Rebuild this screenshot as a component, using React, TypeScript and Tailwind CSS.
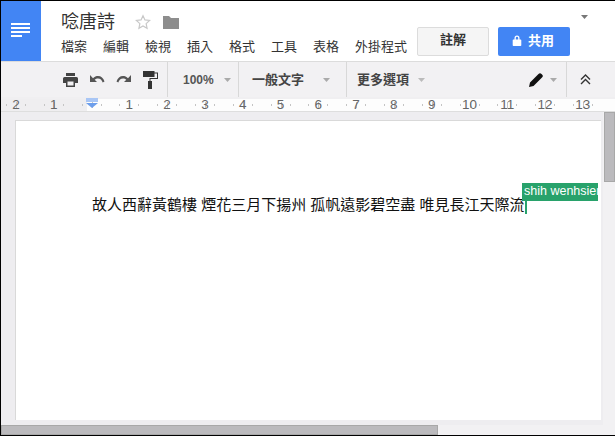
import React from "react";

const menus = ["檔案", "編輯", "檢視", "插入", "格式", "工具", "表格", "外掛程式"];
const rulerNums = ["2", "1", "", "1", "2", "3", "4", "5", "6", "7", "8", "9", "10", "11", "12", "13"];

function Caret({ className = "" }: { className?: string }) {
  return (
    <svg width="7" height="4" viewBox="0 0 7 4" className={className}>
      <path d="M0 0h7L3.5 4z" fill="currentColor" />
    </svg>
  );
}

function RulerCell({ n }: { n: string }) {
  return (
    <div className="w-[37.8px] shrink-0 flex items-center justify-center relative h-full">
      <span className="text-[13.5px] leading-[12px] text-[#666] relative z-10">{n}</span>
      <svg width="38" height="12" viewBox="0 0 38 12" className="absolute left-0 top-0">
        <rect x="9" y="5" width="1" height="2" fill="#c4c4c4" />
        <rect x="19" y="3" width="1" height="6" fill="#c4c4c4" />
        <rect x="28" y="5" width="1" height="2" fill="#c4c4c4" />
      </svg>
    </div>
  );
}

export default function App() {
  return (
    <div className="w-[615px] h-[436px] overflow-hidden bg-white border-t border-l border-b border-black flex flex-col font-['Liberation_Sans','Noto_Sans_CJK_TC',sans-serif] text-[#222]">
      {/* Header */}
      <div className="h-[60px] shrink-0 flex relative">
        <div className="w-[40px] h-[60px] bg-[#4285f4] flex items-center justify-center shrink-0">
          <svg width="20" height="16" viewBox="0 0 20 16">
            <rect x="0" y="0" width="19" height="2" fill="#fff" />
            <rect x="0" y="4" width="19" height="2" fill="#fff" />
            <rect x="0" y="8" width="19" height="2" fill="#fff" />
            <rect x="0" y="12" width="11" height="2" fill="#fff" />
          </svg>
        </div>
        <div className="flex-1 flex flex-col pl-[20px] pt-[9px]">
          <div className="flex items-center h-[24px]">
            <span className="text-[18px] leading-[24px] text-[#333] w-[74px]">唸唐詩</span>
            <svg width="16" height="16" viewBox="0 0 24 24" fill="none" stroke="#c8c8c8" strokeWidth="1.8">
              <path d="M12 2.500l2.900 6.400 7 .8-5.200 4.700 1.400 6.900-6.100-3.500-6.100 3.500 1.400-6.900L2.100 9.700l7-.8z" />
            </svg>
            <svg width="16" height="13" viewBox="0 0 16 13" className="ml-[12px]">
              <path d="M0 0h6l2 2h8v11H0z" fill="#8d8d8d" />
            </svg>
          </div>
          <div className="flex items-center gap-[16px] mt-[4px] text-[13px] leading-[18px] text-[#333] whitespace-nowrap">
            {menus.map((m) => (
              <span key={m}>{m}</span>
            ))}
          </div>
        </div>
        <div className="flex items-start gap-[9px] pt-[26px] pr-[45px]">
          <button className="w-[72px] h-[29px] rounded-[2px] border border-[#dcdcdc] bg-[#f5f5f5] text-[13px] font-bold text-[#333] pb-[3px]">
            註解
          </button>
          <button className="w-[72px] h-[29px] rounded-[2px] bg-[#4285f4] text-white text-[13px] font-bold flex items-center justify-center gap-[6px] pb-[2px] pr-[2px]">
            <svg width="10" height="11" viewBox="0 0 10 11">
              <path d="M2.500 4.500V3a2.500 2.500 0 015 0v1.500h1a.8.8 0 01.8.8v4.900a.8.8 0 01-.8.8h-7a.8.8 0 01-.8-.8V5.300a.8.8 0 01.8-.8zM3.800 4.500h2.400V3a1.200 1.200 0 00-2.400 0z" fill="#fff" fillRule="evenodd" />
            </svg>
            共用
          </button>
        </div>
        <Caret className="absolute right-[27px] top-[14px] text-[#777]" />
      </div>

      {/* Toolbar */}
      <div className="h-[36px] shrink-0 bg-[#f2f1f3] border-t border-[#dcdcdc] flex items-stretch">
        <div className="w-[167px] shrink-0 border-r border-[#d8d8d8] flex items-center justify-end gap-[11px] pr-[9px]">
          <svg width="15" height="14" viewBox="0 0 15 14">
            <path d="M3 0h9v3H3zM1.500 4h12A1.500 1.500 0 0115 5.500V10h-3v4H3v-4H0V5.500A1.500 1.500 0 011.500 4zM4.500 8.500v4h6v-4z" fill="#444" fillRule="evenodd" />
          </svg>
          <svg width="16" height="9" viewBox="0 0 16 9">
            <path d="M4 3.200C5.500 1.500 7.300 1 9 1c3 0 5.500 2 6.500 5.500L13.700 7.500C13 5 11.200 3.400 9 3.400c-1.200 0-2.400.5-3.300 1.400L8 7H1V0z" fill="#555" />
          </svg>
          <svg width="16" height="9" viewBox="0 0 16 9">
            <path d="M12 3.200C10.500 1.500 8.700 1 7 1 4 1 1.500 3 .5 6.500L2.300 7.500C3 5 4.800 3.400 7 3.400c1.200 0 2.400.5 3.300 1.400L8 7h7V0z" fill="#555" />
          </svg>
          <svg width="15" height="18" viewBox="0 0 15 18">
            <path d="M0 0h11.500v1.500H15v6.500H7.500v2H9v8H5v-8h1.500V7H14V2.500h-2.500V6H0z" fill="#333" />
          </svg>
        </div>
        <div className="w-[71px] shrink-0 border-r border-[#d8d8d8] flex items-center pl-[15px] gap-[10px]">
          <span className="text-[12px] font-bold text-[#555]">100%</span>
          <Caret className="text-[#aaa]" />
        </div>
        <div className="w-[108px] shrink-0 border-r border-[#d8d8d8] flex items-center pl-[13px] gap-[19px]">
          <span className="text-[13px] font-bold text-[#444]">一般文字</span>
          <Caret className="text-[#aaa]" />
        </div>
        <div className="flex-1 flex items-center pl-[10px] gap-[9px]">
          <span className="text-[13px] font-bold text-[#444]">更多選項</span>
          <Caret className="text-[#bbb]" />
          <div className="ml-auto flex items-center gap-[7px] pr-[9px]">
            <svg width="14" height="14" viewBox="0 0 14 14">
              <path d="M0 14l1-4.500L9.500 1a2 2 0 013 0l.5.500a2 2 0 010 3L4.500 13z" fill="#111" />
            </svg>
            <Caret className="text-[#aaa]" />
          </div>
        </div>
        <div className="w-[49px] shrink-0 border-l border-[#d8d8d8] flex items-center justify-center pr-[12px]">
          <svg width="11" height="11" viewBox="0 0 11 11" fill="none" stroke="#333" strokeWidth="1.400">
            <path d="M1 5.500L5.500 1 10 5.500M1 10L5.500 5.500 10 10" />
          </svg>
        </div>
      </div>

      {/* Ruler */}
      <div className="h-[14px] shrink-0 bg-[#f0eff1] pt-[2px] relative overflow-hidden">
        <div className="h-[12px] bg-[linear-gradient(90deg,#efeef0_86px,#fdfdfd_86px)] flex">
          <div className="flex h-full ml-[-4px]">
            {rulerNums.map((n, i) => (
              <RulerCell key={i} n={n} />
            ))}
          </div>
        </div>
        <svg width="12" height="11" viewBox="0 0 12 11" className="absolute left-[85px] top-[1px]">
          <rect x="0" y="0" width="12" height="4" fill="#a9c6f5" />
          <path d="M0 5h12L6 10z" fill="#6d9eeb" />
        </svg>
      </div>

      {/* Canvas */}
      <div className="flex-1 min-h-0 bg-[#eeedf0] border-t border-[#dedede] flex flex-col">
        <div className="flex-1 min-h-0 flex">
          <div className="flex-1 min-w-0 pl-[14px] pr-[2px] pt-[8px] pb-[5px]">
            <div className="h-full bg-white border-l border-t border-[#d9d9d9] pl-[76px] pt-[74px] relative">
              <div className="text-[15px] leading-[20px] text-[#111] whitespace-nowrap flex items-center">
                <span>故人西辭黃鶴樓 煙花三月下揚州 孤帆遠影碧空盡 唯見長江天際流</span>
                <span className="w-[2px] h-[17px] bg-[#28a26b]" />
              </div>
              <div className="absolute left-[506px] top-[62px] w-[76px] h-[18px] bg-[#28a26b] text-white text-[12.5px] leading-[17px] pl-[2px] overflow-hidden whitespace-nowrap">
                shih wenhsien
              </div>
            </div>
          </div>
          <div className="w-[12px] shrink-0 bg-[#f2f1f3]">
            <div className="h-[70px] bg-[#bbbabd] border border-[#a8a8a8] ml-[1px]" />
          </div>
        </div>
        <div className="h-[10px] shrink-0 bg-[#f2f1f3]">
          <div className="w-[437px] h-full bg-[#bbbabd] border border-[#a8a8a8]" />
        </div>
      </div>
    </div>
  );
}
